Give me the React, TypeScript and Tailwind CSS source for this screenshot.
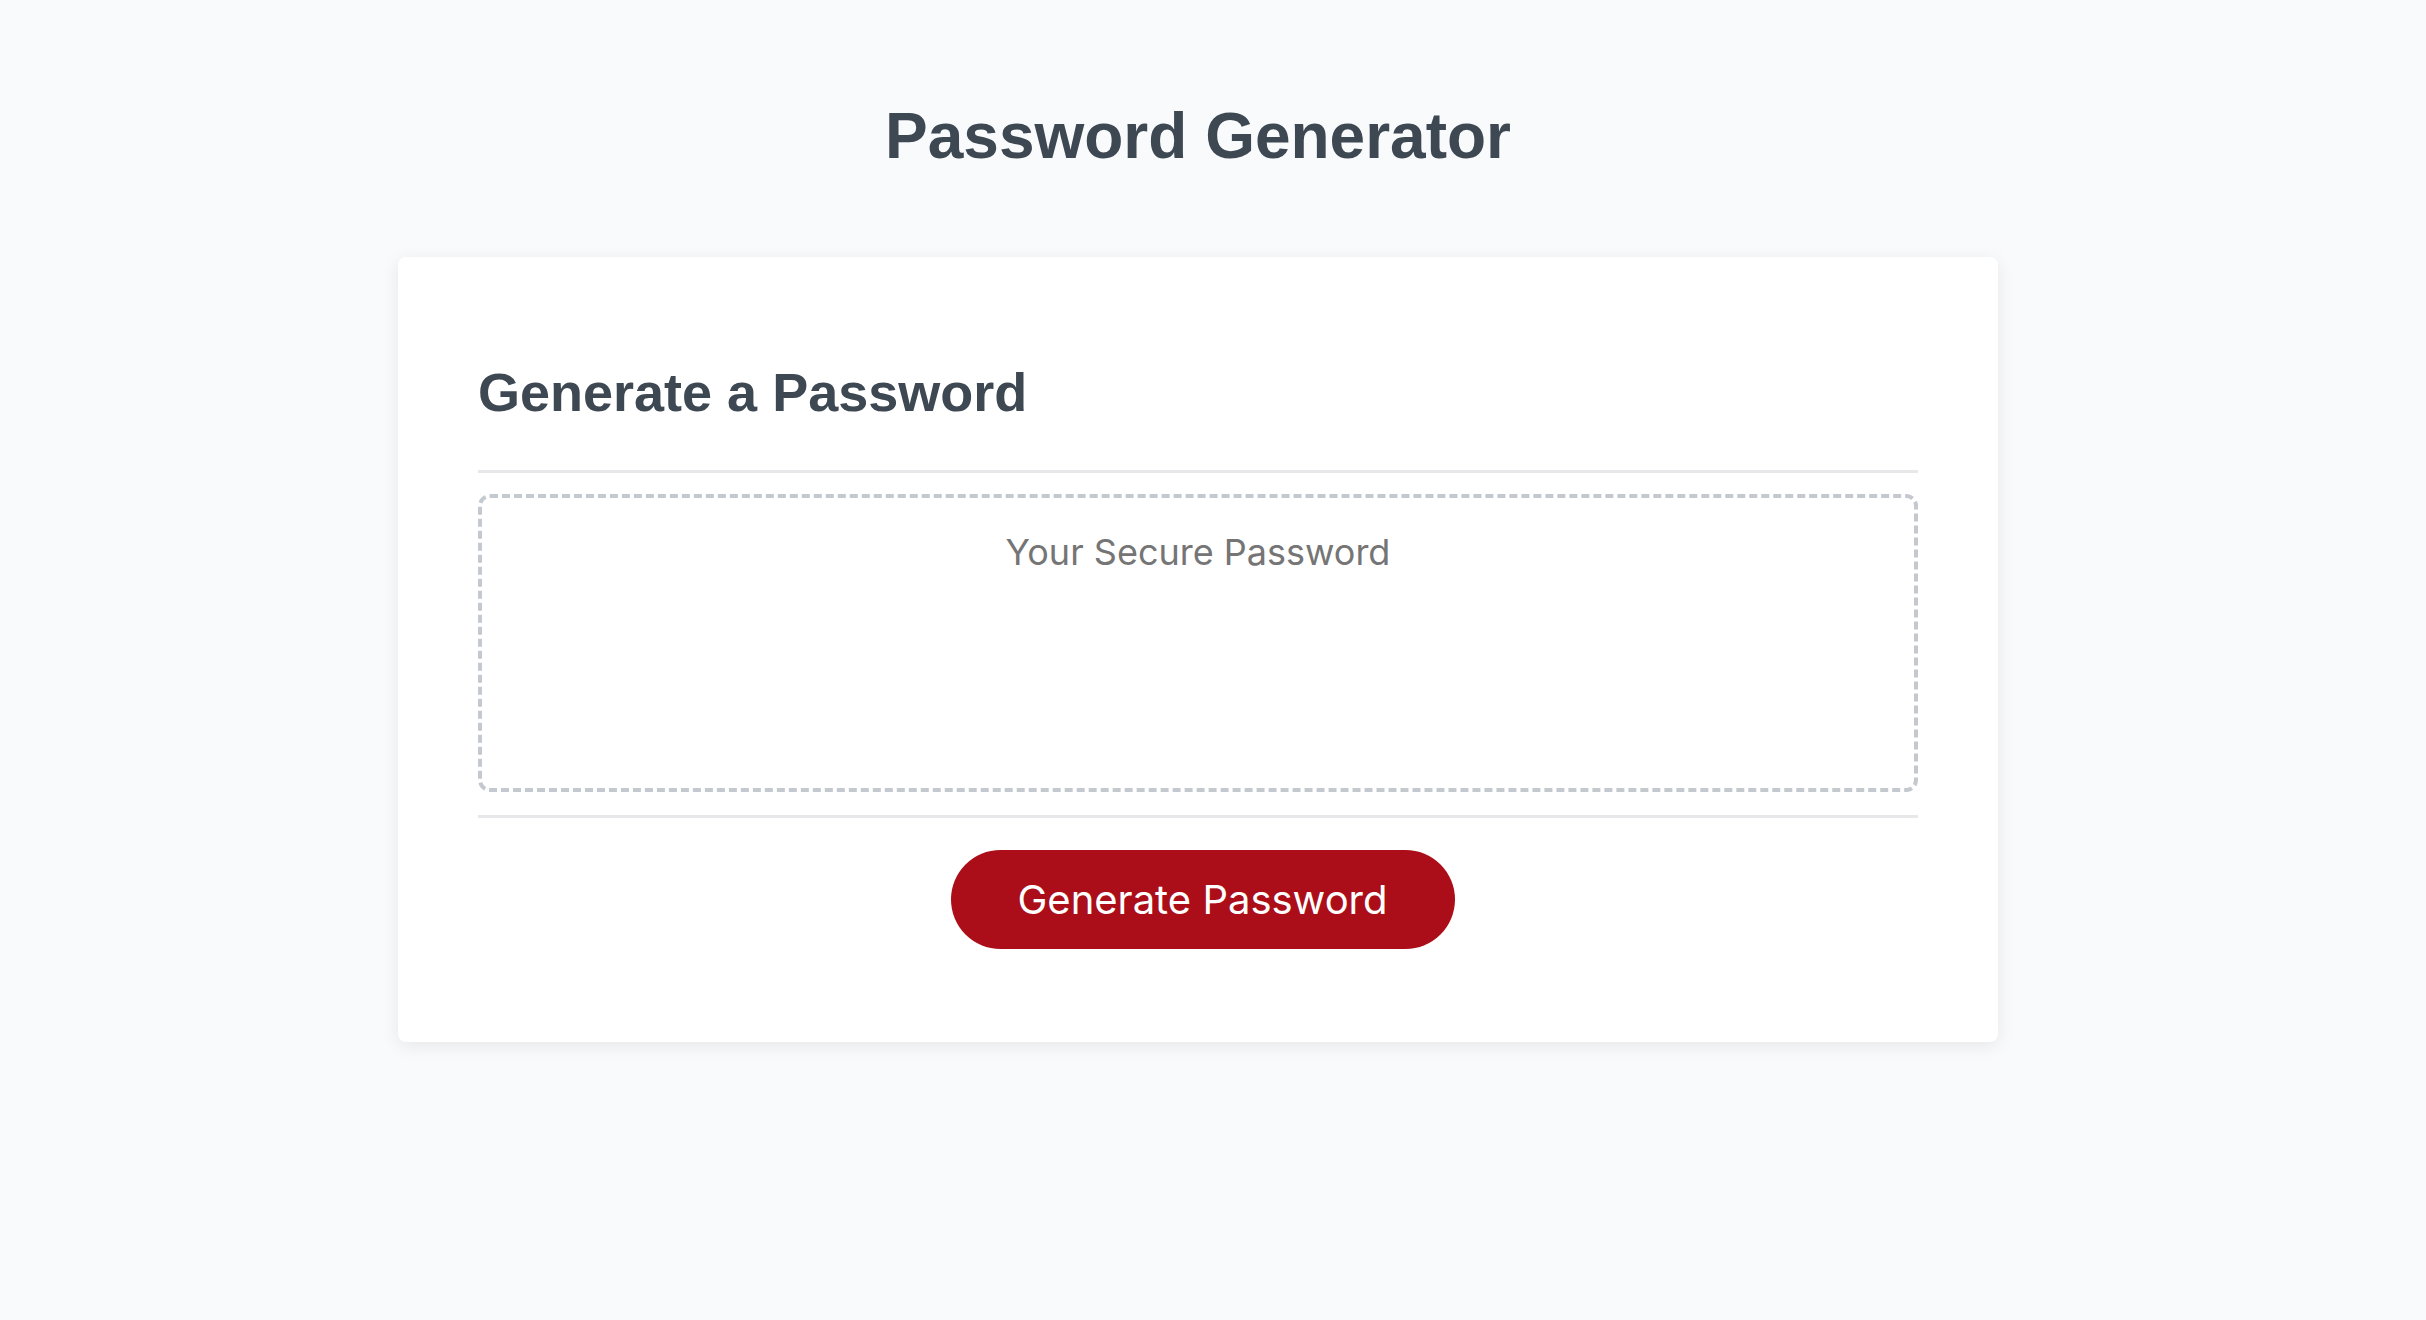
export default function App() {
  return (
    <main className="min-h-screen bg-[#f8fafc] pr-[30px] pt-[104px] pb-[200px] text-[#3d4852]">
      <h1 className="text-center font-['Liberation_Sans',Arial,sans-serif] text-[64px] font-bold leading-[64px]">
        Password Generator
      </h1>
      <section className="mx-auto mt-[89px] w-[1600px] rounded-[8px] bg-white px-[80px] pt-[108px] pb-[93px] shadow-[0_4px_18px_rgba(0,0,0,0.08)]">
        <h2 className="font-['Liberation_Sans',Arial,sans-serif] text-[54px] font-bold leading-[54px]">
          Generate a Password
        </h2>
        <div className="mt-[51px] h-[3px] bg-[#e8e8ea]" />
        <div className="mt-[21px] h-[298px] rounded-[12px] border-[4px] border-dashed border-[#c4c9d0] pt-[36px] text-center font-['Inter',sans-serif] text-[36px] leading-[36px] text-[#757575]">
          Your Secure Password
        </div>
        <div className="mt-[23px] h-[3px] bg-[#e8e8ea]" />
        <div className="mt-[32px] flex justify-center pl-[9px]">
          <button className="h-[99px] w-[504px] rounded-full bg-[#ab0e18] font-['Inter',sans-serif] text-[40px] text-white">
            Generate Password
          </button>
        </div>
      </section>
    </main>
  );
}
